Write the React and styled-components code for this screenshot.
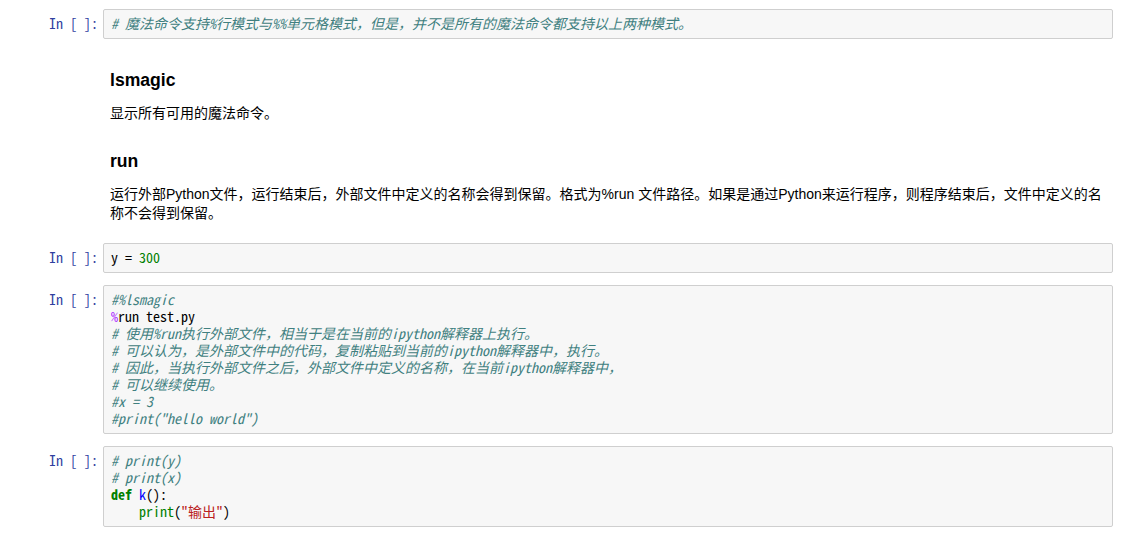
import React from "react";
import styled, { createGlobalStyle } from "styled-components";

const Global = createGlobalStyle`
  html, body { margin: 0; padding: 0; background: #fff; }
  body { font-family: "Liberation Sans", Arial, "Noto Sans CJK SC", sans-serif; }
`;

const MONO = `"Noto Sans Mono CJK SC", "Liberation Mono", "Noto Sans CJK SC", monospace`;

const Notebook = styled.div`
  display: flex;
  flex-direction: column;
  padding: 9px 8px 0 0;
`;

const Cell = styled.div`
  display: grid;
  grid-template-columns: 103px 1fr;
  margin-top: ${(p) => p.$mt || 0}px;
`;

const Prompt = styled.div`
  font-family: ${MONO};
  font-size: 14px;
  line-height: 17px;
  color: #303f9f;
  text-align: right;
  padding: 6px 5px 0 0;
  white-space: pre;
`;

const InputArea = styled.div`
  background: #f7f7f7;
  border: 1px solid #cfcfcf;
  border-radius: 2px;
  padding: 5px 7px 6px 7px;
  font-family: ${MONO};
  font-size: 14px;
  line-height: 17px;
  color: #000;
`;

const Line = styled.div`
  white-space: pre;
  height: 17px;
`;

const colors = {
  c: "#408080",
  k: "#008000",
  n: "#008000",
  f: "#0000ff",
  s: "#ba2121",
  m: "#aa22ff",
  p: "#000",
};

const Tok = styled.span`
  color: ${(p) => colors[p.$k] || "#000"};
  font-style: ${(p) => (p.$k === "c" ? "italic" : "normal")};
  font-weight: ${(p) => (p.$k === "k" ? "bold" : "normal")};
`;

const Rendered = styled.div`
  padding: 0 8px 0 7px;
  color: #000;
`;

const H3 = styled.h3`
  margin: ${(p) => p.$mt || 0}px 0 0 0;
  font-family: "Liberation Sans", Arial, sans-serif;
  font-size: 17.6px;
  line-height: 21px;
  font-weight: bold;
`;

const Para = styled.p`
  margin: 13px 0 0 0;
  font-family: "Liberation Sans", Arial, "Noto Sans CJK SC", sans-serif;
  font-size: 14px;
  line-height: 19px;
`;

function Code({ lines, mt }) {
  return (
    <Cell $mt={mt}>
      <Prompt>In [ ]:</Prompt>
      <InputArea>
        {lines.map((toks, i) => (
          <Line key={i}>
            {toks.map(([k, t], j) => (
              <Tok key={j} $k={k}>
                {t}
              </Tok>
            ))}
          </Line>
        ))}
      </InputArea>
    </Cell>
  );
}

export default function App() {
  return (
    <>
      <Global />
      <Notebook>
        <Code
          lines={[
            [["c", "# 魔法命令支持%行模式与%%单元格模式，但是，并不是所有的魔法命令都支持以上两种模式。"]],
          ]}
        />
        <Cell $mt={31}>
          <div />
          <Rendered>
            <H3>lsmagic</H3>
            <Para>显示所有可用的魔法命令。</Para>
            <H3 $mt={28}>run</H3>
            <Para>
              运行外部Python文件，运行结束后，外部文件中定义的名称会得到保留。格式为%run 文件路径。如果是通过Python来运行程序，则程序结束后，文件中定义的名称不会得到保留。
            </Para>
          </Rendered>
        </Cell>
        <Code
          mt={20}
          lines={[[["p", "y = "], ["n", "300"]]]}
        />
        <Code
          mt={12}
          lines={[
            [["c", "#%lsmagic"]],
            [["m", "%"], ["p", "run test.py"]],
            [["c", "# 使用%run执行外部文件，相当于是在当前的ipython解释器上执行。"]],
            [["c", "# 可以认为，是外部文件中的代码，复制粘贴到当前的ipython解释器中，执行。"]],
            [["c", "# 因此，当执行外部文件之后，外部文件中定义的名称，在当前ipython解释器中，"]],
            [["c", "# 可以继续使用。"]],
            [["c", "#x = 3"]],
            [["c", "#print(\"hello world\")"]],
          ]}
        />
        <Code
          mt={12}
          lines={[
            [["c", "# print(y)"]],
            [["c", "# print(x)"]],
            [["k", "def"], ["p", " "], ["f", "k"], ["p", "():"]],
            [["p", "    "], ["n", "print"], ["p", "("], ["s", "\"输出\""], ["p", ")"]],
          ]}
        />
      </Notebook>
    </>
  );
}
